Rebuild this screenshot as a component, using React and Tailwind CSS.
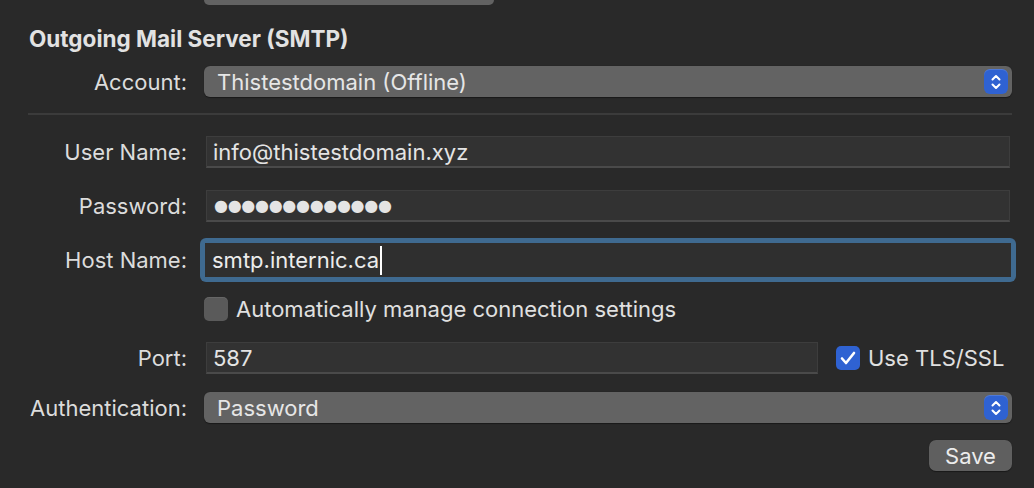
const LABEL = 'w-[187px] shrink-0 text-right text-[22px] leading-[26px] text-[#dcdcdc]'

function Stepper() {
  return (
    <div className="w-[24px] h-[25px] rounded-[6px] bg-[#2f62d2] flex items-center justify-center shadow-[inset_0_1px_0_rgba(255,255,255,0.15)]">
      <svg width="10" height="16" viewBox="0 0 10 16" fill="none" stroke="#ffffff" strokeWidth="2" strokeLinecap="round" strokeLinejoin="round">
        <path d="M1.5 5.5 L5 2 L8.5 5.5" />
        <path d="M1.5 10.5 L5 14 L8.5 10.5" />
      </svg>
    </div>
  )
}

function Popup({ value }) {
  return (
    <div className="flex-1 h-[31px] rounded-[6px] bg-[#636363] flex items-center justify-between pl-[13px] pr-[4px] shadow-[0_0.5px_1px_rgba(0,0,0,0.4)]">
      <span className="text-[22px] leading-[26px] text-[#e6e6e6]">{value}</span>
      <Stepper />
    </div>
  )
}

function Field({ children, className = '' }) {
  return (
    <div className={`h-[32px] bg-[#323232] border-t border-x border-[#3d3d3d] border-b-2 border-b-[#4a4a4a] flex items-center pl-[6px] text-[22px] leading-[26px] text-[#e4e4e4] ${className}`}>
      {children}
    </div>
  )
}

function Check() {
  return (
    <div className="w-[24px] h-[24px] rounded-[5px] bg-[#2f62d2] flex items-center justify-center">
      <svg width="16" height="14" viewBox="0 0 16 14" fill="none" stroke="#ffffff" strokeWidth="2.6" strokeLinecap="round" strokeLinejoin="round">
        <path d="M2 7.5 L6 12 L14 2" />
      </svg>
    </div>
  )
}

export default function App() {
  return (
    <div className="w-[1034px] h-[488px] bg-[#292929] overflow-hidden font-['Inter','Liberation_Sans',sans-serif] antialiased">
      {/* button clipped at the top edge */}
      <div className="ml-[204px] w-[290px] h-[5px] rounded-b-[7px] bg-[#626262]" />

      <h2 className="ml-[29px] mt-[21px] text-[22.5px] leading-[25px] font-bold text-[#e2e2e2]">
        Outgoing Mail Server (SMTP)
      </h2>

      <div className="pr-[22px]">
        {/* Account */}
        <div className="flex items-center gap-[17px] mt-[15px]">
          <span className={LABEL}>Account:</span>
          <Popup value="Thistestdomain (Offline)" />
        </div>

        <div className="ml-[28px] mt-[16px] h-[2px] bg-[#3b3b3b]" />

        {/* User name */}
        <div className="flex items-center gap-[19px] mt-[21px] pr-[2px]">
          <span className={LABEL}>User Name:</span>
          <Field className="flex-1">info@thistestdomain.xyz</Field>
        </div>

        {/* Password */}
        <div className="flex items-center gap-[19px] mt-[22px] pr-[2px]">
          <span className={LABEL}>Password:</span>
          <Field className="flex-1">
            <span className="font-['DejaVu_Sans',sans-serif] text-[16px] tracking-[-0.3px] pl-[1px]">●●●●●●●●●●●●●</span>
          </Field>
        </div>

        {/* Host name with focus ring */}
        <div className="flex items-center gap-[13px] mt-[16px] -mr-[4px]">
          <span className={LABEL}>Host Name:</span>
          <div className="flex-1 h-[44px] rounded-[6px] bg-[#3f6a90] p-[5px]">
            <div className="h-full bg-[#2f2f2f] flex items-center pl-[7px] text-[22px] leading-[26px] text-[#ececec]">
              smtp.internic.ca
              <span className="inline-block w-[2px] h-[29px] bg-white ml-[1px]" />
            </div>
          </div>
        </div>

        {/* Auto manage checkbox */}
        <div className="flex items-center gap-[8px] mt-[14px] ml-[204px]">
          <div className="w-[24px] h-[24px] rounded-[5px] bg-[#5a5a5a] shadow-[inset_0_1px_0_rgba(255,255,255,0.08)]" />
          <span className="text-[22px] leading-[26px] text-[#e0e0e0]">Automatically manage connection settings</span>
        </div>

        {/* Port */}
        <div className="flex items-center mt-[20px]">
          <span className={LABEL}>Port:</span>
          <Field className="ml-[19px] w-[612px]">587</Field>
          <div className="ml-[18px] flex items-center gap-[8px]">
            <Check />
            <span className="text-[22px] leading-[26px] text-[#e0e0e0]">Use TLS/SSL</span>
          </div>
        </div>

        {/* Authentication */}
        <div className="flex items-center gap-[17px] mt-[18px]">
          <span className={LABEL}>Authentication:</span>
          <Popup value="Password" />
        </div>

        <div className="flex justify-end mt-[17px]">
          <button className="w-[83px] h-[31px] rounded-[7px] bg-[#5f5f5f] text-[22px] leading-[26px] text-[#ececec] shadow-[0_0.5px_1px_rgba(0,0,0,0.4)]">
            Save
          </button>
        </div>
      </div>
    </div>
  )
}
